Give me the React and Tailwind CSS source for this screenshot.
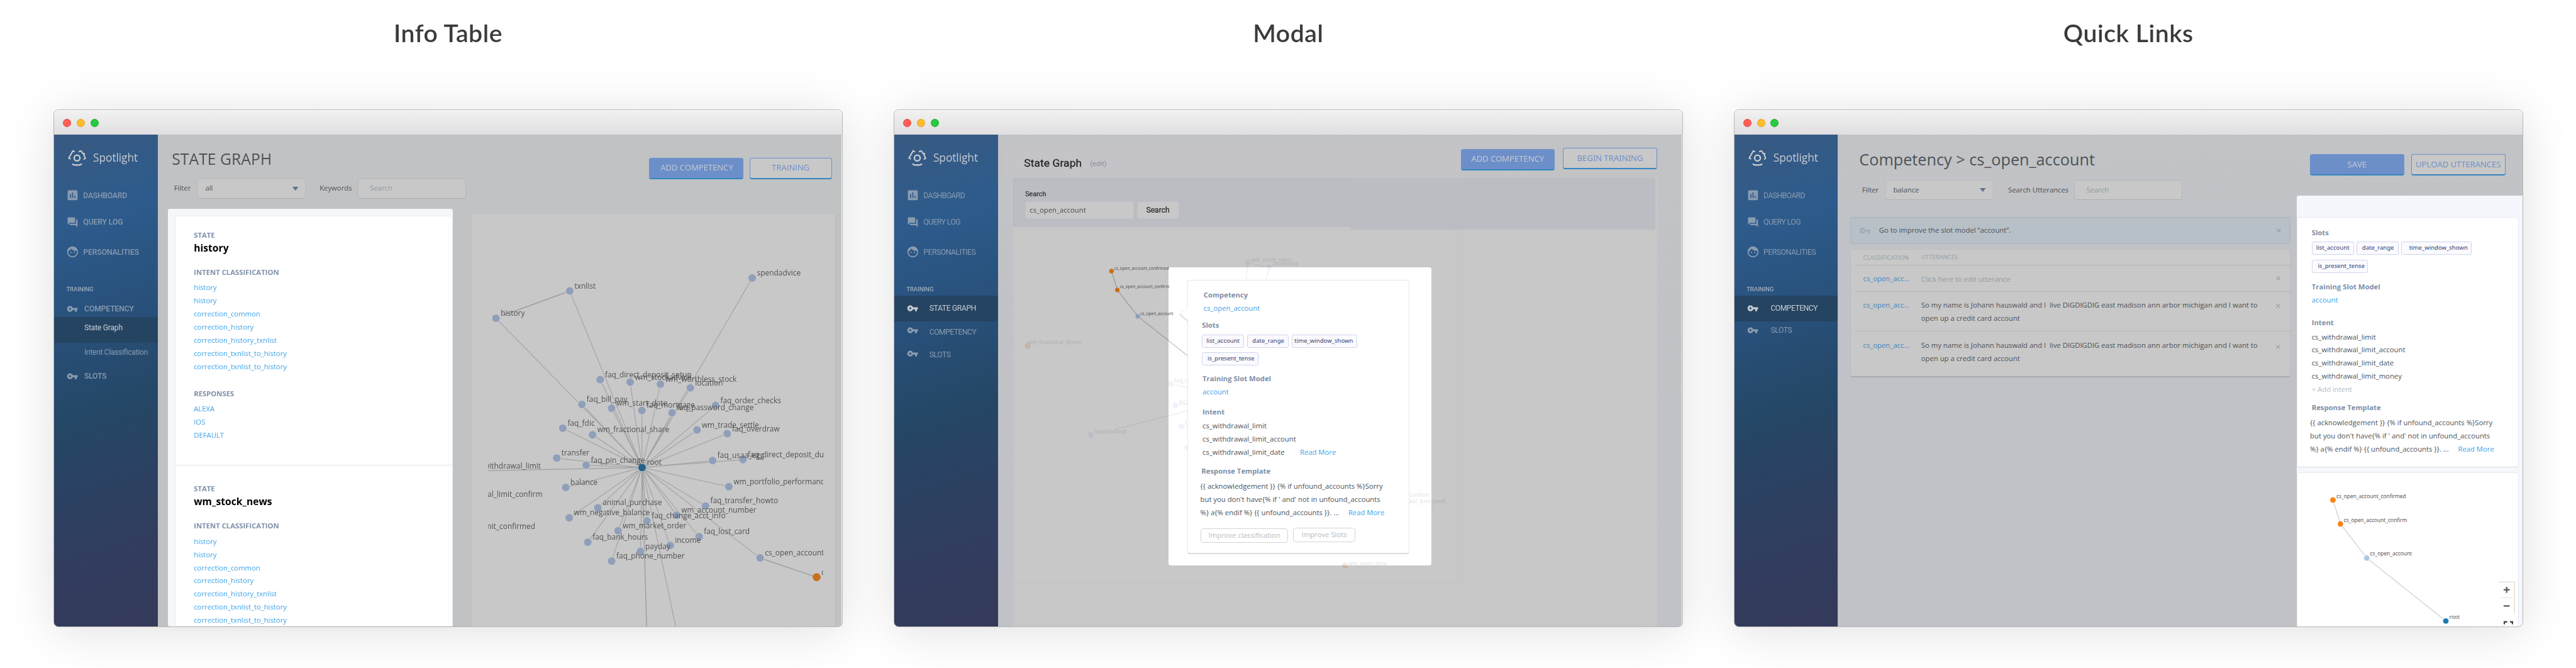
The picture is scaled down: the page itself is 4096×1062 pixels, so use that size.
import React from "react";
import { MdAssessment, MdForum, MdFace, MdVpnKey } from "react-icons/md";

/* ---------- shared pieces ---------- */

function Logo() {
  return (
    <svg className="w-[33px] h-[30px] shrink-0" viewBox="0 0 33 30" fill="none" stroke="#cdd0d3" strokeWidth="2.3">
      <circle cx="16.7" cy="15.2" r="5.3" strokeWidth="2.6" />
      <path d="M8.2 25.6 Q9.4 27.9 12.6 28 H20.6 Q24 27.9 25.2 25.6" strokeWidth="2.6" />
      <path d="M12.6 4 L9 2 L1.6 15.4 L5 17.2" />
      <path d="M19.8 3.8 L22.2 2.4 Q25.2 2 26.8 6.6 L31 7.4 M28.6 8 L31.8 15.6 L28.6 17.8" />
    </svg>
  );
}

function NavItem({ icon: Icon, size, label, className, iconClass = "", textClass, active }) {
  return (
    <div className={`flex items-center pl-[22px] whitespace-nowrap font-['Roboto',sans-serif] text-[14px] ${active ? "text-[#c6ccd3]" : "text-[#8a9bb0]"} ${className}`}>
      <span className={`flex w-[24px] shrink-0 items-center justify-center ${iconClass}`}>{Icon ? <Icon size={size} /> : null}</span>
      <span className={textClass}>{label}</span>
    </div>
  );
}

function Sidebar({ bold, children }) {
  const w = bold ? "font-medium" : "font-normal";
  return (
    <aside className="w-[189px] shrink-0 overflow-hidden bg-[linear-gradient(162deg,#385a82_0%,#2d5b8c_18%,#28507a_38%,#254766_56%,#2b4262_68%,#323c5e_85%,#343a5a_100%)]">
      <div className="mt-[27px] flex h-[30px] items-center gap-[13px] pl-[25px]">
        <Logo />
        <span className="-mt-[2px] text-[20px] leading-[28px] text-[#c6cbd1] tracking-[-0.1px]">Spotlight</span>
      </div>
      <NavItem icon={MdAssessment} size={24} label="DASHBOARD" className={`mt-[42px] h-[24px] ${w}`} textClass={bold ? "ml-[7px] tracking-[-0.25px]" : "ml-[7px] tracking-[-0.65px]"} />
      <NavItem icon={MdForum} size={21.6} label="QUERY LOG" className={`mt-[25px] h-[24px] ${w}`} textClass={bold ? "ml-[7px] tracking-[-0.1px]" : "ml-[7px] tracking-[-0.6px]"} />
      <NavItem icon={MdFace} size={24} label="PERSONALITIES" className={`mt-[30px] h-[25px] ${w}`} textClass={bold ? "ml-[7px] tracking-[-0.1px]" : "ml-[7px] tracking-[-0.5px]"} />
      <div className="mt-[45px] h-[20px] pl-[22px] font-['Roboto',sans-serif] text-[11px] leading-[20px] text-[#b9c1cb]">TRAINING</div>
      {children}
    </aside>
  );
}

function Window({ title, children }) {
  return (
    <section className="w-[1442px] shrink-0">
      <h2 className="mt-[30px] mb-[110px] h-[60px] text-center font-['Lato',sans-serif] text-[45px] leading-[60px] font-semibold tracking-[0.6px] text-[#3b3b3b]">{title}</h2>
      <div className="flex h-[946px] flex-col overflow-hidden rounded-[9px] border border-[#b6b7b8] bg-[#f4f4f4] shadow-[0_8px_88px_-2px_rgba(0,0,0,0.13)]">
        <div className="flex h-[45px] shrink-0 items-center gap-[10px] border-t border-white bg-[linear-gradient(180deg,#f1f1f1,#e1dfe1)] pl-[16px]">
          <span className="size-[15px] rounded-full border border-[#e0443e] bg-[#ff5f57]" />
          <span className="size-[15px] rounded-full border border-[#dea123] bg-[#ffbd2e]" />
          <span className="size-[15px] rounded-full border border-[#1aab29] bg-[#28ca41]" />
        </div>
        <div className="flex min-h-0 flex-1">{children}</div>
      </div>
    </section>
  );
}

function PrimaryButton({ children, className = "" }) {
  return (
    <button className={`h-[39px] w-[172px] rounded-[4px] border-b-[3px] border-[#3585bf] bg-[#6c8fc9] text-[15px] leading-[36px] text-[#c6cad0] whitespace-nowrap ${className}`}>{children}</button>
  );
}

function OutlineButton({ children, className }) {
  return (
    <button className={`h-[39px] rounded-[4px] border border-b-[3px] border-[#6c8fc9] border-b-[#3585bf] bg-[#c8c8c8] text-[15px] leading-[34px] text-[#6c8fc9] whitespace-nowrap ${className}`}>{children}</button>
  );
}

function Select({ value }) {
  return (
    <div className="flex h-[37px] w-[198px] items-center justify-between rounded-[4px] border border-b-2 border-[#b9bdc3] border-b-[#aab0b8] bg-[#c8c8c8] pr-[13px] pl-[13px]">
      <span>{value}</span>
      <svg className="w-[11px] h-[7px]" viewBox="0 0 11 7"><path d="M0 0H11L5.5 7Z" fill="#5f7089" /></svg>
    </div>
  );
}

function SearchBox({ className }) {
  return (
    <div className={`flex h-[37px] items-center rounded-[4px] border border-b-2 border-[#b4b8bc] border-b-[#a9aeb4] bg-[#c8c8c8] pl-[21px] text-[#8e999e] ${className}`}>Search</div>
  );
}

function Heading({ children, className = "" }) {
  return <h3 className={`h-[24px] font-bold text-[#7d8fa8] ${className}`}>{children}</h3>;
}

function Chip({ children, className }) {
  return (
    <span className={`block h-[24px] shrink-0 rounded-[3px] border border-[#cfd6ec] bg-[#fafaff] font-['Noto_Sans',sans-serif] text-[11px] leading-[21px] whitespace-nowrap text-[#36416f] ${className}`}>{children}</span>
  );
}

function Cross({ className = "" }) {
  return (
    <svg className={`w-[8px] h-[8px] shrink-0 ${className}`} viewBox="0 0 8 8" stroke="#777c80" strokeWidth="1"><path d="M0.5 0.5L7.5 7.5M7.5 0.5L0.5 7.5" /></svg>
  );
}

/* ---------- Info Table ---------- */

const INTENTS = ["history", "history", "correction_common", "correction_history", "correction_history_txnlist", "correction_txnlist_to_history", "correction_txnlist_to_history"];

function StateBlock({ name, responses }) {
  return (
    <div className="pl-[34px] text-[#3ea2e8]">
      <h3 className="h-[20px] leading-[20px] font-bold text-[#7d8fa8]">STATE</h3>
      <p className="mt-[2px] h-[24px] text-[18px] font-bold text-black">{name}</p>
      <h3 className="mt-[22px] mb-[7px] h-[20px] leading-[20px] font-bold text-[#7d8fa8]">INTENT CLASSIFICATION</h3>
      {INTENTS.map((t, i) => <p key={i} className="h-[24px]">{t}</p>)}
      {responses ? (
        <>
          <h3 className="mt-[27px] mb-[7px] h-[20px] leading-[20px] font-bold text-[#7d8fa8]">RESPONSES</h3>
          {responses.map((t) => <p key={t} className="h-[24px]">{t}</p>)}
        </>
      ) : null}
    </div>
  );
}

const ROOT = [281.6, 463.6];
const NODES = [
  ["txnlist", 149.3, 140.9], ["history", 14.5, 190.7], ["spendadvice", 482.8, 117.3],
  ["faq_direct_deposit_setup", 205, 302.9], ["wm_stockadvice", 259.8, 307.4], ["wm_worthless_stock", 315.1, 311.2],
  ["location", 369.8, 318.2], ["faq_bill_pay", 171.6, 348.2], ["wm_start_date", 225.9, 355.2],
  ["faq_mortgage", 281.1, 359.1], ["faq_password_change", 336.4, 363.5], ["faq_order_checks", 415.9, 350.1],
  ["faq_fdic", 136.7, 391.6], ["wm_fractional_share", 191, 403.7], ["wm_trade_settle", 382, 394.8],
  ["faq_overdraw", 437.2, 401.8], ["transfer", 125.5, 446.4], ["faq_pin_change", 179.3, 459.2],
  ["faq_usaa_egg", 410.6, 450.9], ["faq_direct_deposit_duration", 465.8, 449], ["balance", 142, 500],
  ["wm_portfolio_performance", 440.1, 498.7], ["faq_transfer_howto", 397.5, 533.8], ["animal_purchase", 200.7, 537],
  ["wm_negative_balance", 148.3, 555.5], ["wm_account_number", 344.6, 550.4], ["faq_change_acct_info", 290.4, 561.2],
  ["wm_market_order", 237.5, 579.1], ["faq_bank_hours", 182.3, 600.1], ["faq_lost_card", 385.8, 589.9],
  ["income", 333, 605.9], ["payday", 278.7, 616.7], ["faq_phone_number", 225.9, 634.6], ["cs_open_account", 497.3, 628.8],
];

function StateGraph() {
  return (
    <svg className="ml-[30px] w-[612px] h-[755px]" viewBox="0 0 612 755">
      <g stroke="#a0a0a0" strokeWidth="1.2">
        {NODES.map(([n, x, y]) => n === "cs_open_account" || n !== "" ? <line key={n} x1={ROOT[0]} y1={ROOT[1]} x2={x} y2={y} /> : null)}
        <line x1={ROOT[0]} y1={ROOT[1]} x2="0" y2="469.4" />
        <line x1={ROOT[0]} y1={ROOT[1]} x2="289.9" y2="755" strokeWidth="1.8" />
        <line x1={ROOT[0]} y1={ROOT[1]} x2="343.2" y2="755" />
        <path d="M149.3 140.9L48 178L24 186" stroke="#969696" fill="none" strokeWidth="1.5" />
        <line x1="497.3" y1="628.8" x2="600.6" y2="663.9" stroke="#969696" strokeWidth="1.5" />
      </g>
      <g fill="#8f9fb9" stroke="#c8c8c8" strokeWidth="1.2">
        {NODES.map(([n, x, y]) => <circle key={n} cx={x} cy={y} r="7.5" />)}
      </g>
      <circle cx={ROOT[0]} cy={ROOT[1]} r="7.5" fill="#26628c" stroke="#d0d4d8" strokeWidth="1" />
      <circle cx="600.6" cy="663.9" r="7.3" fill="#c8701d" />
      <g fill="#525252" fontSize="13.7">
        {NODES.map(([n, x, y]) => <text key={n} x={x + 8.7} y={y - 4.5}>{n}</text>)}
        <text x="290.3" y="459">root</text>
        <text x="609.3" y="659.4">cs_open_account_confirm</text>
        <text x="96.5" y="466" textAnchor="end">cs_withdrawal_limit</text>
        <text x="99.4" y="517" textAnchor="end">cs_withdrawal_limit_confirm</text>
        <text x="86.3" y="576" textAnchor="end">cs_withdrawal_limit_confirmed</text>
      </g>
    </svg>
  );
}

function InfoTable() {
  return (
    <Window title="Info Table">
      <Sidebar bold>
        <NavItem icon={MdVpnKey} size={21} label="COMPETENCY" className="mt-[14px] h-[24px] font-medium" iconClass="pr-[1px]" textClass="ml-[9px] tracking-[-0.15px]" />
        <NavItem label="State Graph" active className="mt-[3px] h-[47px] bg-[#254462] pb-[6px]" textClass="ml-[9px] tracking-[-0.3px]" />
        <NavItem label="Intent Classification" className="mt-[6px] h-[24px]" textClass="ml-[9px] tracking-[-0.4px]" />
        <NavItem icon={MdVpnKey} size={21} label="SLOTS" className="mt-[19px] h-[24px] font-medium" iconClass="pr-[1px]" textClass="ml-[9px] tracking-[-0.3px]" />
      </Sidebar>
      <main className="flex w-[1250px] flex-col bg-[#c0c2c4] text-[13px] leading-[24px] text-[#4b5156]">
        <div className="flex h-[135px] shrink-0 justify-between">
          <div className="pl-[26px]">
            <h1 className="mt-[24px] h-[42px] text-[28.5px] leading-[42px] text-[#4c5355]">STATE GRAPH</h1>
            <div className="mt-[14px] flex items-center">
              <span className="w-[47px] pl-[4px]">Filter</span>
              <Select value="all" />
              <span className="ml-[25px] w-[70px]">Keywords</span>
              <SearchBox className="w-[198px]" />
            </div>
          </div>
          <div className="mr-[18px] flex gap-[12px] pt-[42px]">
            <PrimaryButton className="pl-[3px]">ADD COMPETENCY</PrimaryButton>
            <OutlineButton className="w-[150px]">TRAINING</OutlineButton>
          </div>
        </div>
        <div className="flex min-h-0 flex-1 items-stretch pl-[19px]">
          <div className="w-[520px] shrink-0 overflow-hidden rounded-[4px] bg-[#f5f7fa] pt-[13px] pl-[12px]">
            <div className="h-full rounded-t-[4px] border border-[#e8ebee] bg-white pt-[24px]">
              <StateBlock name="history" responses={["ALEXA", "IOS", "DEFAULT"]} />
              <div className="mt-[41px] mb-[33px] h-px bg-[#dfe3ec]" />
              <StateBlock name="wm_stock_news" />
            </div>
          </div>
          <div className="mt-[9px] ml-[34px] w-[667px] shrink-0 overflow-hidden rounded-t-[4px] border border-b-0 border-[#bcbdbe] bg-[#c8c8c8]">
            <StateGraph />
          </div>
        </div>
      </main>
    </Window>
  );
}

/* ---------- Modal ---------- */

const FAINT = [
  ["wm_stock_news", 645.7, 234.8, 652, 232], ["stockprice", 684.8, 242.2, 691.6, 239],
  ["spendadvice", 359.3, 548.7, 366, 546.3], ["faq_order", 505.3, 456, 511.7, 452.5],
  ["location", 513.7, 494.7, 519.7, 492], ["faq_fdic", 524.7, 533.3, 531, 531], ["faq_lost", 535.3, 571.7, 542, 569],
];

function FaintGraph() {
  return (
    <svg className="pointer-events-none absolute top-0 left-0 w-[1440px] h-[899px] mix-blend-multiply" viewBox="0 0 1440 899">
      <g stroke="#ececec" strokeWidth="1.3">
        <path d="M645.7 234.8L643.3 266M684.8 242.2L679.3 266M652 236L680 241M402.7 538.7L536 504.7M511.7 457.3L536 462M520 494L536 493" fill="none" />
      </g>
      <g fill="#eff3fb">
        {FAINT.map(([n, x, y]) => <circle key={n} cx={x} cy={y} r="5.4" />)}
      </g>
      <circle cx="243.7" cy="386" r="5.4" fill="#fce6d6" />
      <circle cx="823.6" cy="787.5" r="5.4" fill="#fce6d6" />
      <g fill="#dedede" fontSize="10">
        {FAINT.map(([n, , , x, y]) => <text key={n} x={x} y={y}>{n}</text>)}
        <text x="243.7" y="383">wm_fractional_shares</text>
        <text x="829.5" y="787">wm_open_date</text>
        <text x="977.8" y="661.5" textAnchor="end">cs_withdrawal_limit_confirm</text>
        <text x="1007.5" y="673.5" textAnchor="end">cs_withdrawal_limit_confi</text>
      </g>
      <g stroke="#bdbdbd" strokeWidth="1.2">
        <path d="M397 249.4L407.7 283.9L445 332L536 404" fill="none" />
      </g>
    </svg>
  );
}

function ActiveGraph() {
  return (
    <svg className="pointer-events-none absolute top-0 left-0 w-[1440px] h-[899px]" viewBox="0 0 1440 899">
      <circle cx="397" cy="249.4" r="4.2" fill="#c86f16" />
      <circle cx="407.7" cy="283.9" r="4.2" fill="#c86f16" />
      <circle cx="445" cy="332" r="4.2" fill="#8c9fbf" />
      <g fill="#4a4a4a" fontSize="7.6">
        <text x="401.8" y="246.8">cs_open_account_confirmed</text>
        <text x="412" y="281">cs_open_account_confirm</text>
        <text x="449.8" y="329.6">cs_open_account</text>
      </g>
    </svg>
  );
}

function DetailCard() {
  return (
    <div className="absolute top-[265px] left-[535px] h-[501px] w-[406px] rounded-[4px] border border-b-[3px] border-[#e6e7e9] border-b-[#dcdddd] bg-white text-[13px] leading-[24px] text-[#4b5259]">
      <svg className="absolute top-[49px] -left-[16px] w-[17px] h-[27px]" viewBox="0 0 17 27">
        <path d="M16.5 0.5L0.8 13L16.5 25V0.5Z" fill="#fff" />
        <path d="M15.5 0.8L0.8 13" stroke="#e6e7e9" strokeWidth="1" fill="none" />
        <path d="M0.8 13.5L15.5 25.3" stroke="#dcdddd" strokeWidth="2.2" fill="none" />
      </svg>
      <Heading className="mt-[15px] ml-[29px]">Competency</Heading>
      <p className="ml-[29px] h-[24px] text-[#3ea2e8]">cs_open_account</p>
      <Heading className="mt-[8px] ml-[26px]">Slots</Heading>
      <div className="mt-[4px] ml-[26px] flex gap-[5px]">
        <Chip className="w-[77px] pl-[7px]">list_account</Chip>
        <Chip className="w-[77px] pl-[9px]">date_range</Chip>
        <Chip className="w-[120px] pl-[4px]">time_window_shown</Chip>
      </div>
      <div className="mt-[9px] ml-[26px] flex">
        <Chip className="w-[103px] pl-[9px]">is_present_tense</Chip>
      </div>
      <Heading className="mt-[12px] ml-[27px]">Training Slot Model</Heading>
      <p className="ml-[27px] h-[24px] text-[#3ea2e8]">account</p>
      <Heading className="mt-[13px] ml-[27px]">Intent</Heading>
      <div className="mt-[2px] ml-[27px]">
        <p className="h-[24px]">cs_withdrawal_limit</p>
        <p className="h-[24px]">cs_withdrawal_limit_account</p>
        <p className="flex h-[24px] gap-[28px]"><span>cs_withdrawal_limit_date</span><span className="text-[#3ea2e8]">Read More</span></p>
      </div>
      <Heading className="mt-[10px] ml-[25px]">Response Template</Heading>
      <div className="mt-[4px] ml-[23px] whitespace-nowrap">
        <p className="h-[24px]">{"{{ acknowledgement }} {% if unfound_accounts %}Sorry"}</p>
        <p className="h-[24px]">{"but you don't have{% if ' and' not in unfound_accounts"}</p>
        <p className="flex h-[24px] gap-[17px]"><span>{"%} a{% endif %} {{ unfound_accounts }}. ..."}</span><span className="text-[#3ea2e8]">Read More</span></p>
      </div>
      <div className="mt-[15px] ml-[24px] flex items-start gap-[10px] text-[#b9babb]">
        <button className="mt-px h-[27px] w-[159px] rounded-[5px] border-[1.5px] border-[#d4d4d5] leading-[23px]">Improve classification</button>
        <button className="h-[27px] w-[113px] rounded-[5px] border-[1.5px] border-[#d4d4d5] leading-[23px]">Improve Slots</button>
      </div>
    </div>
  );
}

function ModalView() {
  return (
    <Window title="Modal">
      <Sidebar>
        <NavItem icon={MdVpnKey} size={21} label="STATE GRAPH" active className="mt-[2px] h-[47px] bg-[#254462]" iconClass="pr-[1px]" textClass="ml-[18px] tracking-[-0.45px]" />
        <NavItem icon={MdVpnKey} size={21} label="COMPETENCY" className="mt-[8px] h-[24px]" iconClass="pr-[1px] pb-[6px]" textClass="ml-[18px] tracking-[-0.6px]" />
        <NavItem icon={MdVpnKey} size={21} label="SLOTS" className="mt-[18px] h-[24px]" iconClass="pr-[1px] pb-[6px]" textClass="ml-[18px] tracking-[-0.5px]" />
      </Sidebar>
      <main className="relative -ml-[189px] flex w-[1439px] flex-col pl-[189px] text-[13px] leading-[24px] text-[#4b5156]">
        <div className="flex min-h-0 flex-1 flex-col bg-[linear-gradient(180deg,#c1c3c5,#c1c2c8)]">
          <div className="flex h-[79px] shrink-0 justify-between pl-[11px]">
            <div className="mt-[24px] flex flex-1 items-start bg-[#c3c3c8] pl-[37px] font-['Roboto',sans-serif]">
              <h1 className="mt-[14px] text-[20px] leading-[28px] tracking-[0.1px] text-[#262728] [-webkit-text-stroke:0.35px]">State Graph</h1>
              <span className="mt-[18px] ml-[15px] text-[#8c8e98]">(edit)</span>
            </div>
            <div className="mr-[45px] flex items-start gap-[15px] pt-[24px] font-['Noto_Sans',sans-serif]">
              <PrimaryButton className="mt-[2px]">ADD COMPETENCY</PrimaryButton>
              <OutlineButton className="w-[172px]">BEGIN TRAINING</OutlineButton>
            </div>
          </div>
          <div className="mr-[45px] ml-[28px] flex min-h-0 flex-1 flex-col bg-[#c7c7c7]">
            <div className="flex h-[94px] shrink-0">
              <div className="h-[90px] w-[617px] rounded-tl-[4px] border-t border-l border-[#b4b7bf] bg-[#bbbdc3] pl-[21px] font-['Roboto',sans-serif] text-[#26282b]">
                <p className="mt-[17px] h-[24px] text-[12.5px] [-webkit-text-stroke:0.2px]">Search</p>
                <div className="mt-px flex gap-[5px]">
                  <div className="h-[32px] w-[199px] rounded-[5px] border border-[#bfc2cd] bg-[#c8c8c8] pl-[7px] font-['Open_Sans',sans-serif] leading-[29px] text-[#44494e]">cs_open_account</div>
                  <button className="h-[32px] w-[77px] rounded-[5px] border border-[#bfc2cd] bg-[#c8c8c8] text-[14px] [-webkit-text-stroke:0.25px]">Search</button>
                </div>
              </div>
              <div className="h-[94px] w-[557px] bg-[#bbbdc3]" />
            </div>
            <div className="h-[646px] w-[812px] rounded-[4px] border border-[#c4c4c4] bg-[#c8c8c8]" />
          </div>
        </div>
        <div className="absolute top-[242px] left-[501px] h-[545px] w-[481px] rounded-[4px] bg-white" />
        <FaintGraph />
        <ActiveGraph />
        <DetailCard />
      </main>
    </Window>
  );
}

/* ---------- Quick Links ---------- */

const UTTERANCE = "So my name is Johann hauswald and I \u00a0live DIGDIGDIG east madison ann arbor michigan and I want to open up a credit card account";

function Row({ children, className, linkClass, bodyClass, crossClass }) {
  return (
    <div className={`-mr-[4px] ml-[9px] flex shrink-0 items-start border-t border-[#b3b6b9] ${className}`}>
      <span className={`ml-[13px] w-[106px] text-[#3d86c0] ${linkClass}`}>cs_open_acc...</span>
      <span className={`w-[632px] ${bodyClass}`}>{children}</span>
      <Cross className={`ml-[17px] ${crossClass}`} />
    </div>
  );
}

function QuickPanel() {
  return (
    <div className="absolute top-[111px] right-0 flex h-[788px] w-[412px] flex-col overflow-hidden rounded-tl-[4px] bg-[#f4f7fc] pt-[39px] pr-[6px] text-[#4b5259]">
      <div className="h-[458px] shrink-0 rounded-[4px] border border-b-2 border-[#e6eaf0] border-b-[#d6d9de] bg-white">
        <Heading className="mt-[16px] ml-[26px]">Slots</Heading>
        <div className="mt-[4px] ml-[26px] flex gap-[5px]">
          <Chip className="w-[77px] pl-[7px]">list_account</Chip>
          <Chip className="w-[77px] pl-[9px]">date_range</Chip>
          <Chip className="w-[128px] pl-[13px]">time_window_shown</Chip>
        </div>
        <div className="mt-[10px] ml-[26px] flex">
          <Chip className="w-[103px] pl-[10px]">is_present_tense</Chip>
        </div>
        <Heading className="mt-[14px] ml-[26px]">Training Slot Model</Heading>
        <p className="ml-[26px] h-[24px] text-[#3ea2e8]">account</p>
        <Heading className="mt-[17px] ml-[26px]">Intent</Heading>
        <div className="mt-[2px] ml-[26px]">
          <p className="h-[24px]">cs_withdrawal_limit</p>
          <p className="h-[24px]">cs_withdrawal_limit_account</p>
          <p className="h-[24px]">cs_withdrawal_limit_date</p>
          <p className="h-[24px]">cs_withdrawal_limit_money</p>
          <p className="h-[24px] text-[#b1bdc9]">+ Add intent</p>
        </div>
        <Heading className="mt-[9px] ml-[26px]">Response Template</Heading>
        <div className="mt-[4px] ml-[23px] whitespace-nowrap">
          <p className="h-[24px]">{"{{ acknowledgement }} {% if unfound_accounts %}Sorry"}</p>
          <p className="h-[24px]">{"but you don't have{% if ' and' not in unfound_accounts"}</p>
          <p className="flex h-[24px] gap-[17px]"><span>{"%} a{% endif %} {{ unfound_accounts }}. ..."}</span><span className="text-[#3ea2e8]">Read More</span></p>
        </div>
      </div>
      <div className="mt-[9px] min-h-0 flex-1 rounded-t-[4px] border border-b-0 border-[#e6eaf0] bg-white">
        <svg className="w-[404px] h-[281px]" viewBox="1029 618 404 281">
          <path d="M1094 667.3L1107.7 711L1155.7 773.4L1300.3 888.5" fill="none" stroke="#c6c6c6" strokeWidth="1.2" />
          <circle cx="1094" cy="667.3" r="5.3" fill="#ff7f0e" stroke="#fff" strokeWidth="0.6" />
          <circle cx="1107.7" cy="711" r="5.3" fill="#ff7f0e" stroke="#fff" strokeWidth="0.6" />
          <circle cx="1155.7" cy="773.4" r="5.3" fill="#aec7e8" stroke="#fff" strokeWidth="0.6" />
          <circle cx="1300.3" cy="888.5" r="5.3" fill="#1f77b4" stroke="#fff" strokeWidth="0.6" />
          <g fill="#4a4a4a" fontSize="9.7">
            <text x="1100.3" y="664">cs_open_account_confirmed</text>
            <text x="1113.7" y="707.5">cs_open_account_confirm</text>
            <text x="1161.7" y="769">cs_open_account</text>
            <text x="1306.7" y="885">root</text>
          </g>
          <path d="M1397 817H1426.5M1425.8 817V874" stroke="#e0dbd0" strokeWidth="1.6" fill="none" />
          <path d="M1401 846H1421" stroke="#e4e4e4" strokeWidth="1" />
          <path d="M1406 831.5H1417M1411.5 826V837M1406 861H1417" stroke="#5a5a5a" strokeWidth="2.6" />
          <path d="M1407.2 894.5V890H1412.5M1417.5 890H1422V894.5" stroke="#3c3c3c" strokeWidth="2.4" fill="none" />
        </svg>
      </div>
    </div>
  );
}

function QuickLinks() {
  return (
    <Window title="Quick Links">
      <Sidebar>
        <NavItem icon={MdVpnKey} size={21} label="COMPETENCY" active className="mt-[2px] h-[47px] bg-[#254462]" iconClass="pr-[1px]" textClass="ml-[20px] tracking-[-0.6px]" />
        <NavItem icon={MdVpnKey} size={21} label="SLOTS" className="mt-[5px] h-[24px]" iconClass="pr-[1px]" textClass="ml-[20px] tracking-[-0.5px]" />
      </Sidebar>
      <main className="relative flex w-[1251px] flex-col bg-[linear-gradient(180deg,#c1c3c5,#c1c2c7_20%)] text-[13px] leading-[24px] text-[#4b5156]">
        <div className="flex h-[151px] shrink-0 justify-between">
          <div className="pl-[39px]">
            <h1 className="mt-[24px] h-[42px] text-[29px] leading-[42px] text-[#4c5355]">Competency &gt; cs_open_account</h1>
            <div className="mt-[16px] flex items-center">
              <span className="w-[48px] pl-[5px]">Filter</span>
              <Select value="balance" />
              <span className="ml-[26px] w-[121px]">Search Utterances</span>
              <SearchBox className="mt-px w-[198px]" />
            </div>
          </div>
          <div className="mr-[31px] flex gap-[13px] pt-[36px]">
            <PrimaryButton>SAVE</PrimaryButton>
            <OutlineButton className="w-[172px]">UPLOAD UTTERANCES</OutlineButton>
          </div>
        </div>
        <div className="ml-[23px] flex h-[49px] w-[804px] shrink-0 items-center rounded-[4px] border border-b-2 border-[#abb4bb] bg-[#b7c0c7]">
          <MdVpnKey size={22} className="ml-[15px] text-[#a5adb3]" />
          <span className="ml-[14px] flex-1">Go to improve the slot model “account”.</span>
          <Cross className="mr-[16px]" />
        </div>
        <div className="mt-[9px] ml-[23px] flex h-[234px] w-[804px] shrink-0 flex-col rounded-[4px] border border-b-[3px] border-[#bbbdc0] border-b-[#a9abb0] bg-[#c8c8c8]">
          <div className="flex h-[28px] shrink-0 pt-[3px] pl-[22px] text-[11px] text-[#949fa4]">
            <span className="w-[106px]">CLASSIFICATION</span>
            <span className="-mt-px">UTTERANCES</span>
          </div>
          <Row className="h-[48px]" linkClass="mt-[12px]" bodyClass="mt-[13px] text-[#909b9f]" crossClass="mt-[19px]">Click here to edit utterance</Row>
          <Row className="h-[72px]" linkClass="mt-[13px]" bodyClass="mt-[13px]" crossClass="mt-[22px]">{UTTERANCE}</Row>
          <Row className="h-[80px]" linkClass="mt-[14px]" bodyClass="mt-[14px]" crossClass="mt-[25px]">{UTTERANCE}</Row>
        </div>
        <QuickPanel />
      </main>
    </Window>
  );
}

export default function App() {
  return (
    <div className="flex h-[1220px] w-[4708px] gap-[93.5px] overflow-hidden bg-white pl-[98px] font-['Open_Sans',sans-serif] [zoom:0.87]">
      <InfoTable />
      <ModalView />
      <QuickLinks />
    </div>
  );
}
